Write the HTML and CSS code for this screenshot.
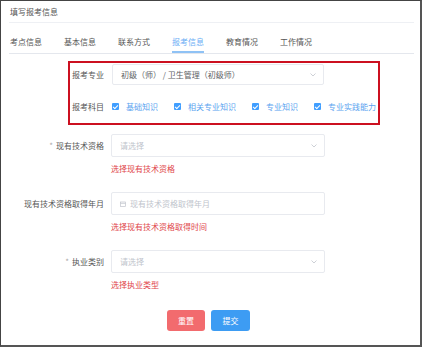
FILE: index.html
```html
<!DOCTYPE html>
<html>
<head>
  <meta charset="utf-8" />
  <title>填写报考信息</title>
  <link rel="stylesheet" href="styles.css">
</head>
<body>
<div class="frame">
  <div class="panel">
    <div class="panel-title">填写报考信息</div>
    <div class="tabs">
      <div class="tab">考点信息</div>
      <div class="tab">基本信息</div>
      <div class="tab">联系方式</div>
      <div class="tab active">报考信息</div>
      <div class="tab">教育情况</div>
      <div class="tab">工作情况</div>
    </div>

    <div class="highlight">
      <div class="hl-row">
        <div class="hl-label">报考专业</div>
        <div class="select wide">
          <span class="value">初级（师） / 卫生管理（初级师）</span>
          <svg class="chevron" width="6" height="4" viewBox="0 0 6 4"><path d="M0.5 0.5 L3 3 L5.5 0.5" fill="none" stroke="#c0c4cc" stroke-width="0.8"/></svg>
        </div>
      </div>
      <div class="hl-row subjects">
        <div class="hl-label">报考科目</div>
        <div class="checks">
          <label class="check"><span class="box"></span>基础知识</label>
          <label class="check"><span class="box"></span>相关专业知识</label>
          <label class="check"><span class="box"></span>专业知识</label>
          <label class="check"><span class="box"></span>专业实践能力</label>
        </div>
      </div>
    </div>

    <div class="form">
      <div class="row">
        <div class="label"><span class="star">*</span>现有技术资格</div>
        <div class="field">
          <div class="select">
            <span class="placeholder">请选择</span>
            <svg class="chevron" width="6" height="4" viewBox="0 0 6 4"><path d="M0.5 0.5 L3 3 L5.5 0.5" fill="none" stroke="#c0c4cc" stroke-width="0.8"/></svg>
          </div>
          <div class="error">选择现有技术资格</div>
        </div>
      </div>
      <div class="row">
        <div class="label">现有技术资格取得年月</div>
        <div class="field">
          <div class="select">
            <svg class="cal" width="6" height="6" viewBox="0 0 6 6"><rect x="0.5" y="1" width="5" height="4.5" fill="none" stroke="#c0c4cc" stroke-width="0.7"/><line x1="0.5" y1="2.4" x2="5.5" y2="2.4" stroke="#c0c4cc" stroke-width="0.7"/></svg>
            <span class="placeholder">现有技术资格取得年月</span>
          </div>
          <div class="error">选择现有技术资格取得时间</div>
        </div>
      </div>
      <div class="row">
        <div class="label"><span class="star">*</span>执业类别</div>
        <div class="field">
          <div class="select">
            <span class="placeholder">请选择</span>
            <svg class="chevron" width="6" height="4" viewBox="0 0 6 4"><path d="M0.5 0.5 L3 3 L5.5 0.5" fill="none" stroke="#c0c4cc" stroke-width="0.8"/></svg>
          </div>
          <div class="error">选择执业类型</div>
        </div>
      </div>
      <div class="actions">
        <button class="btn reset">重置</button>
        <button class="btn submit">提交</button>
      </div>
    </div>
  </div>
</div>
</body>
</html>
```

FILE: styles.css
```css
body {
  margin: 0;
  padding: 0;
  background: #fff;
  font-family: "Noto Sans CJK SC", "Noto Sans", sans-serif;
  font-size: 8px;
  color: #606266;
}
.frame {
  width: 422px;
  height: 347px;
  box-sizing: border-box;
  border-left: 1px solid #444;
  border-top: 1px solid #444;
  border-right: 2px solid #555;
  border-bottom: 2px solid #555;
  overflow: hidden;
}
.panel {
  margin: 0 6px 0 8px;
}
.panel-title {
  height: 21px;
  line-height: 22px;
  padding-left: 1px;
  color: #555;
  border-bottom: 1px solid #eef0f4;
}
.tabs {
  display: flex;
  gap: 22px;
  margin-top: 10px;
  padding-left: 1px;
  border-bottom: 1px solid #e4e7ed;
}
.tab {
  height: 18px;
  line-height: 18px;
  color: #555;
  border-bottom: 2px solid transparent;
}
.tab.active {
  color: #6aaef5;
  border-bottom-color: #8fc2f5;
}
.highlight {
  width: 312px;
  height: 64px;
  box-sizing: border-box;
  margin: 7px 0 0 59px;
  padding: 1px 2px 0;
  border: 2px solid #cc1020;
}
.hl-row {
  display: flex;
  align-items: center;
  gap: 8px;
}
.hl-label {
  width: 32px;
  flex-shrink: 0;
  color: #555;
}
.subjects {
  margin-top: 16px;
}
.checks {
  display: flex;
  white-space: nowrap;
}
.check {
  display: flex;
  align-items: center;
  gap: 7px;
  margin-right: 16px;
  color: #5aa3ef;
  flex-shrink: 0;
}
.check:last-child {
  margin-right: 0;
}
.box {
  width: 7px;
  height: 7px;
  border-radius: 1px;
  background: #409eff;
  position: relative;
  flex-shrink: 0;
}
.box::after {
  content: "";
  position: absolute;
  left: 2px;
  top: 0.5px;
  width: 2px;
  height: 4px;
  border: solid #fff;
  border-width: 0 1px 1px 0;
  transform: rotate(45deg);
}
.select {
  width: 214px;
  height: 23px;
  box-sizing: border-box;
  border: 1px solid #e8eaef;
  border-radius: 2px;
  display: flex;
  align-items: center;
  padding: 0 7px 0 8px;
  gap: 4px;
}
.select.wide {
  width: 212px;
  height: 21px;
}
.value {
  color: #606266;
  flex: 1;
}
.placeholder {
  color: #c0c4cc;
  flex: 1;
}
.chevron {
  flex-shrink: 0;
}
.cal {
  flex-shrink: 0;
}
.form {
  margin-top: 9px;
}
.row {
  display: flex;
  gap: 7px;
  margin-bottom: 16px;
}
.label {
  width: 95px;
  height: 23px;
  line-height: 23px;
  text-align: right;
  color: #555;
}
.star {
  color: #aaa;
  margin-right: 3px;
}
.error {
  margin-top: 5px;
  line-height: 14px;
  color: #e0444a;
}
.actions {
  display: flex;
  gap: 6px;
  margin: 18px 0 0 158px;
}
.btn {
  height: 21px;
  border: none;
  border-radius: 3px;
  color: #fff;
  font-family: inherit;
  font-size: 8px;
  padding: 0;
}
.reset {
  width: 38px;
  background: #f26b6e;
}
.submit {
  width: 39px;
  background: #3d9cf3;
}
```
